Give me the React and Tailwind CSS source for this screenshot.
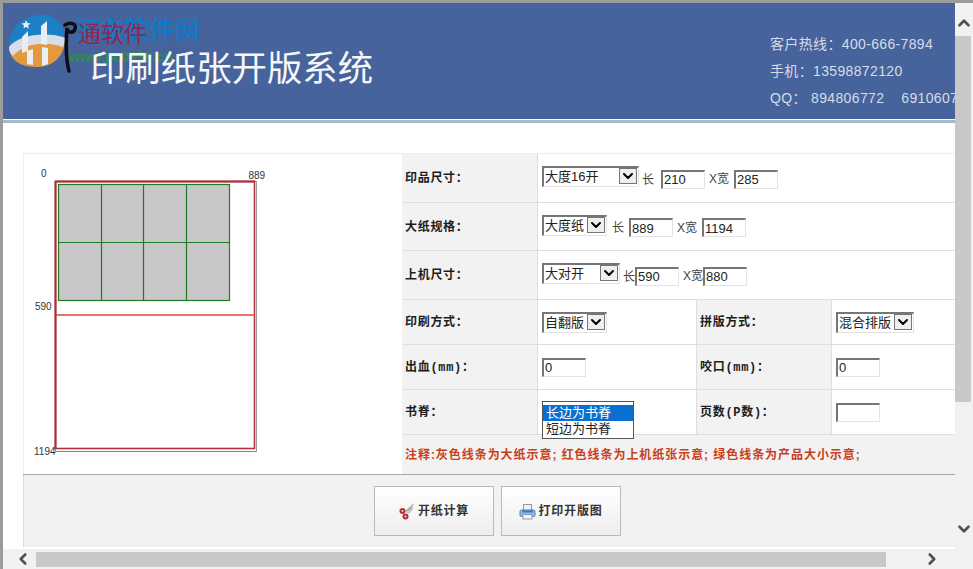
import { ChevronUp, ChevronDown, ChevronLeft, ChevronRight } from 'lucide-react';

const Select = ({ text, width }) => (
  <div className={`inline-flex h-[21px] shrink-0 items-start justify-between border-t-2 border-l-2 border-t-[#767676] border-l-[#767676] border-r border-b border-r-[#e3e3e3] border-b-[#e3e3e3] bg-white ${width}`}>
    <span className="pl-[1px] text-[13px] leading-[17px] whitespace-nowrap text-[#222]">{text}</span>
    <span className="mr-[1px] flex h-[16px] w-[18px] shrink-0 items-center justify-center border border-[#767676] bg-[#efefef]">
      <ChevronDown className="h-[16px] w-[16px] text-black" strokeWidth={3} />
    </span>
  </div>
);

const Input = ({ value = '', className = '' }) => (
  <input
    readOnly
    value={value}
    className={`h-[19px] w-[44px] shrink-0 border-t-2 border-l-2 border-t-[#767676] border-l-[#767676] border-r border-b border-r-[#e3e3e3] border-b-[#e3e3e3] bg-white pl-[1px] text-[13px] leading-[15px] text-[#222] outline-none ${className}`}
  />
);

const Label = ({ children }) => (
  <div className="flex items-center border-b border-[#dedede] bg-[#f2f2f2] pt-[2px] pl-[3px] font-['Liberation_Mono','Noto_Sans_CJK_SC',monospace] text-[12px] font-bold tracking-[0.7px] text-[#1c1c1c]">
    {children}
  </div>
);

const Small = ({ children, className = '' }) => (
  <span className={`shrink-0 text-[12px] text-[#444] ${className}`}>{children}</span>
);

const SizeRow = ({ label, height, select, selectWidth, gapA, gapB, gapC, gapD, a, b }) => (
  <div className={`grid grid-cols-[135px_1fr] ${height}`}>
    <Label>{label}</Label>
    <div className="flex items-center border-b border-l border-[#dedede] pl-[4px] pb-[3px]">
      <Select text={select} width={selectWidth} />
      <Small className={`mt-[6px] ${gapA}`}>长</Small>
      <Input value={a} className={`mt-[5px] ${gapB}`} />
      <Small className={`mt-[5px] ${gapC}`}>X宽</Small>
      <Input value={b} className={`mt-[5px] ${gapD}`} />
    </div>
  </div>
);

const Diagram = () => (
  <svg width="378" height="321" viewBox="24 154 378 321" className="block">
    <rect x="55.5" y="181.5" width="201" height="270" fill="#fff" stroke="#9a9a9a" />
    <rect x="55.5" y="181.5" width="199" height="267" fill="none" stroke="#b5343c" strokeWidth="1.6" />
    <line x1="55" y1="181.5" x2="255" y2="181.5" stroke="#a83038" strokeWidth="2" />
    <line x1="55.5" y1="181" x2="55.5" y2="449" stroke="#a83038" strokeWidth="2" />
    <line x1="56" y1="315" x2="255" y2="315" stroke="#e2453d" strokeWidth="1.5" />
    <line x1="56" y1="451.5" x2="256" y2="451.5" stroke="#6f8f6f" />
    <rect x="58.5" y="184.5" width="171" height="116" fill="#c8c8c8" stroke="#1f7a2a" strokeWidth="1.2" />
    <g stroke="#1f7a2a" strokeWidth="1.2">
      <line x1="101.5" y1="184" x2="101.5" y2="300" />
      <line x1="143.5" y1="184" x2="143.5" y2="300" />
      <line x1="186.5" y1="184" x2="186.5" y2="300" />
      <line x1="58" y1="242.5" x2="230" y2="242.5" />
    </g>
    <g fontSize="10" fill="#333">
      <text x="41" y="177">0</text>
      <text x="248.5" y="179">889</text>
      <text x="35" y="310">590</text>
      <text x="34" y="455">1194</text>
    </g>
  </svg>
);

const Logo = () => (
  <svg width="62" height="60" viewBox="0 0 62 60" className="absolute left-[3px] top-[8px]">
    <path d="M3 36 C3 12 24 2 40 4 C52 6 60 16 58 30 C38 22 16 24 3 36 Z" fill="#1d7fc4" />
    <path d="M3 38 C12 27 38 24 59 30 C58 46 46 56 31 56 C15 56 5 50 3 38 Z" fill="#e39a3e" />
    <path d="M3 36 C12 24 40 20 60 27 L57 36 C38 30 18 32 7 45 C4 42 3 40 3 36 Z" fill="#d9dde6" />
    <path d="M16 26 L22 20 L22 40 L16 42 Z M35 15 L41 10 L41 34 L35 33 Z" fill="#e9edf4" />
    <path d="M21 40 L27 38 L27 54 L21 53 Z M36 36 L42 37 L42 53 L36 55 Z" fill="#e9edf4" />
    <path d="M20 9 L21.5 12 L24.5 12.5 L22 14.5 L23 17.5 L20 16 L17.5 17.5 L18 14.5 L15.5 12.5 L19 12 Z" fill="#e9edf4" />
  </svg>
);

const Scribble = () => (
  <svg width="20" height="54" viewBox="0 0 20 54" className="absolute left-[57px] top-[18px]">
    <path d="M5 4 C10 1 17 2 15 8 C13 13 8 12 7 7 C6 20 5 36 9 50" fill="none" stroke="#0c0c14" strokeWidth="3.5" strokeLinecap="round" />
  </svg>
);

const Scissors = () => (
  <svg width="17" height="18" viewBox="0 0 17 18" className="shrink-0">
    <path d="M5 10 L15 1 L12 9 Z" fill="#a9b0ae" />
    <path d="M7 11 L16 5 L10 12 Z" fill="#c9cfcd" />
    <circle cx="3.5" cy="9" r="3" fill="#b8323c" />
    <circle cx="6.5" cy="14.5" r="3" fill="#b8323c" />
    <circle cx="3.5" cy="9" r="1" fill="#f0d0d0" />
    <circle cx="6.5" cy="14.5" r="1" fill="#f0d0d0" />
  </svg>
);

const Printer = () => (
  <svg width="17" height="17" viewBox="0 0 17 17" className="shrink-0">
    <rect x="4.5" y="1.5" width="8" height="6" fill="#eef2f6" stroke="#8d9aa8" />
    <rect x="1" y="7" width="15" height="6.5" rx="1.5" fill="#8fbde4" stroke="#5a7da0" />
    <rect x="3" y="7.5" width="11" height="2" fill="#2f80cc" />
    <rect x="4" y="11.5" width="9" height="4.5" fill="#f3f5f7" stroke="#8d9aa8" />
  </svg>
);

const Button = ({ icon, text }) => (
  <div className="flex h-[50px] w-[120px] items-center justify-center gap-[2px] border border-[#b9b9b9] bg-gradient-to-b from-white to-[#eeeeee] text-[12px] font-bold tracking-[0.8px] text-[#333]">
    {icon}
    <span>{text}</span>
  </div>
);

export default function App() {
  return (
    <div className="flex h-[569px] w-[973px] flex-col overflow-hidden bg-white font-['Liberation_Sans','Noto_Sans_CJK_SC',sans-serif]">
      <div className="flex min-h-0 flex-1 border-t-[3px] border-l-[3px] border-[#9c9c9c]">
        <main className="flex w-[952px] shrink-0 flex-col">
          {/* banner */}
          <header className="relative flex h-[116px] shrink-0 overflow-hidden bg-[#46639b]">
            <Logo />
            <div className="absolute left-[72px] top-[12px] text-[25px] leading-[30px] font-bold whitespace-nowrap text-[#1478c4]">河东软件网</div>
            <div className="absolute left-[75px] top-[17px] text-[23px] leading-[28px] whitespace-nowrap text-[#a8143c] opacity-80">通软件</div>
            <div className="absolute left-[66px] top-[46px] text-[14px] leading-[16px] font-bold whitespace-nowrap text-[#2f8f4a]">www.pc0359.cn</div>
            <Scribble />
            <h1 className="relative mt-[42px] ml-[87px] h-[48px] w-[680px] shrink-0 text-[35.4px] leading-[48px] font-normal whitespace-nowrap text-[#f4f6fa]">印刷纸张开版系统</h1>
            <div className="relative mt-[31px] flex shrink-0 flex-col gap-[7px] text-[14px] leading-[20px] tracking-[0.35px] whitespace-nowrap text-[#d5dcea]">
              <div>客户热线：400-666-7894</div>
              <div>手机：13598872120</div>
              <div>QQ： 894806772&nbsp;&nbsp;&nbsp;&nbsp;6910607</div>
            </div>
          </header>
          <div className="mt-[1px] h-[3px] shrink-0 bg-[#a5bcc4]" />

          {/* form area */}
          <div className="mt-[30px] ml-[20px] flex min-h-0 flex-1 flex-col">
            <div className="flex h-[322px] shrink-0 border-t border-b border-t-[#eeeeee] border-b-[#a8a8a8]">
              <div className="w-[379px] shrink-0 border-l border-[#eeeeee]">
                <Diagram />
              </div>
              <div className="flex min-w-0 flex-1 flex-col">
                <SizeRow label="印品尺寸：" height="h-[49px]" select="大度16开" selectWidth="w-[97px]" gapA="ml-[3px]" gapB="ml-[7px]" gapC="ml-[4px]" gapD="ml-[5px]" a="210" b="285" />
                <SizeRow label="大纸规格：" height="h-[48px]" select="大度纸" selectWidth="w-[65px]" gapA="ml-[5px]" gapB="ml-[5px]" gapC="ml-[4px]" gapD="ml-[5px]" a="889" b="1194" />
                <SizeRow label="上机尺寸：" height="h-[49px]" select="大对开" selectWidth="w-[78px]" gapA="ml-[3px]" gapB="ml-0" gapC="ml-[4px]" gapD="ml-0" a="590" b="880" />
                <div className="grid h-[135px] grid-cols-[135px_159px_135px_1fr] grid-rows-[45px_45px_45px]">
                  <Label>印刷方式：</Label>
                  <div className="flex items-center border-b border-l border-[#dedede] pl-[4px]">
                    <Select text="自翻版" width="w-[65px]" />
                  </div>
                  <div className="grid border-l border-[#dedede]"><Label>拼版方式：</Label></div>
                  <div className="flex items-center border-b border-l border-[#dedede] pl-[4px]">
                    <Select text="混合排版" width="w-[78px]" />
                  </div>
                  <Label>出血(mm)：</Label>
                  <div className="flex items-center border-b border-l border-[#dedede] pl-[4px]">
                    <Input value="0" />
                  </div>
                  <div className="grid border-l border-[#dedede]"><Label>咬口(mm)：</Label></div>
                  <div className="flex items-center border-b border-l border-[#dedede] pl-[4px]">
                    <Input value="0" />
                  </div>
                  <Label>书脊：</Label>
                  <div className="flex items-start border-b border-l border-[#dedede] pl-[4px] pt-[11px]">
                    <div className="relative z-10 w-[92px] border border-[#555] bg-white pt-[3px] pb-[2px] text-[13px] leading-[15.5px] text-[#222]">
                      <div className="bg-[#0a6fd0] pl-[3px] text-white">长边为书脊</div>
                      <div className="pl-[3px]">短边为书脊</div>
                    </div>
                  </div>
                  <div className="grid border-l border-[#dedede]"><Label>页数(P数)：</Label></div>
                  <div className="flex items-center border-b border-l border-[#dedede] pl-[4px]">
                    <Input />
                  </div>
                </div>
                <div className="flex flex-1 items-center whitespace-nowrap bg-[#f2f2f2] pl-[3px] text-[12px] font-bold tracking-[0.95px] text-[#c8401a]">
                  注释:灰色线条为大纸示意; 红色线条为上机纸张示意; 绿色线条为产品大小示意;
                </div>
              </div>
            </div>
            <div className="flex h-[72px] shrink-0 gap-[7px] border-l border-[#dddddd] bg-[#f2f2f2] pt-[11px] pl-[350px]">
              <Button icon={<Scissors />} text="开纸计算" />
              <Button icon={<Printer />} text="打印开版图" />
            </div>
          </div>
        </main>

        {/* vertical scrollbar */}
        <div className="flex w-[18px] shrink-0 flex-col bg-[#f1f1f1]">
          <div className="flex h-[33px] shrink-0 items-center justify-center pt-[6px]">
            <ChevronUp className="h-[18px] w-[18px] text-[#505050]" strokeWidth={3.5} />
          </div>
          <div className="mr-[2px] h-[366px] shrink-0 bg-[#c8c8c8]" />
          <div className="flex flex-1 items-end justify-center pb-[11px]">
            <ChevronDown className="h-[18px] w-[18px] text-[#505050]" strokeWidth={3.5} />
          </div>
        </div>
      </div>

      {/* horizontal scrollbar */}
      <div className="flex h-[20px] shrink-0 items-center border-l-[3px] border-[#9c9c9c] bg-[#f1f1f1]">
        <div className="flex w-[33px] shrink-0 items-center justify-center pl-[7px]">
          <ChevronLeft className="h-[18px] w-[18px] text-[#505050]" strokeWidth={3.5} />
        </div>
        <div className="h-[15px] w-[850px] shrink-0 bg-[#c8c8c8]" />
        <div className="flex w-[55px] shrink-0 items-center justify-end">
          <ChevronRight className="h-[18px] w-[18px] text-[#505050]" strokeWidth={3.5} />
        </div>
      </div>
    </div>
  );
}
